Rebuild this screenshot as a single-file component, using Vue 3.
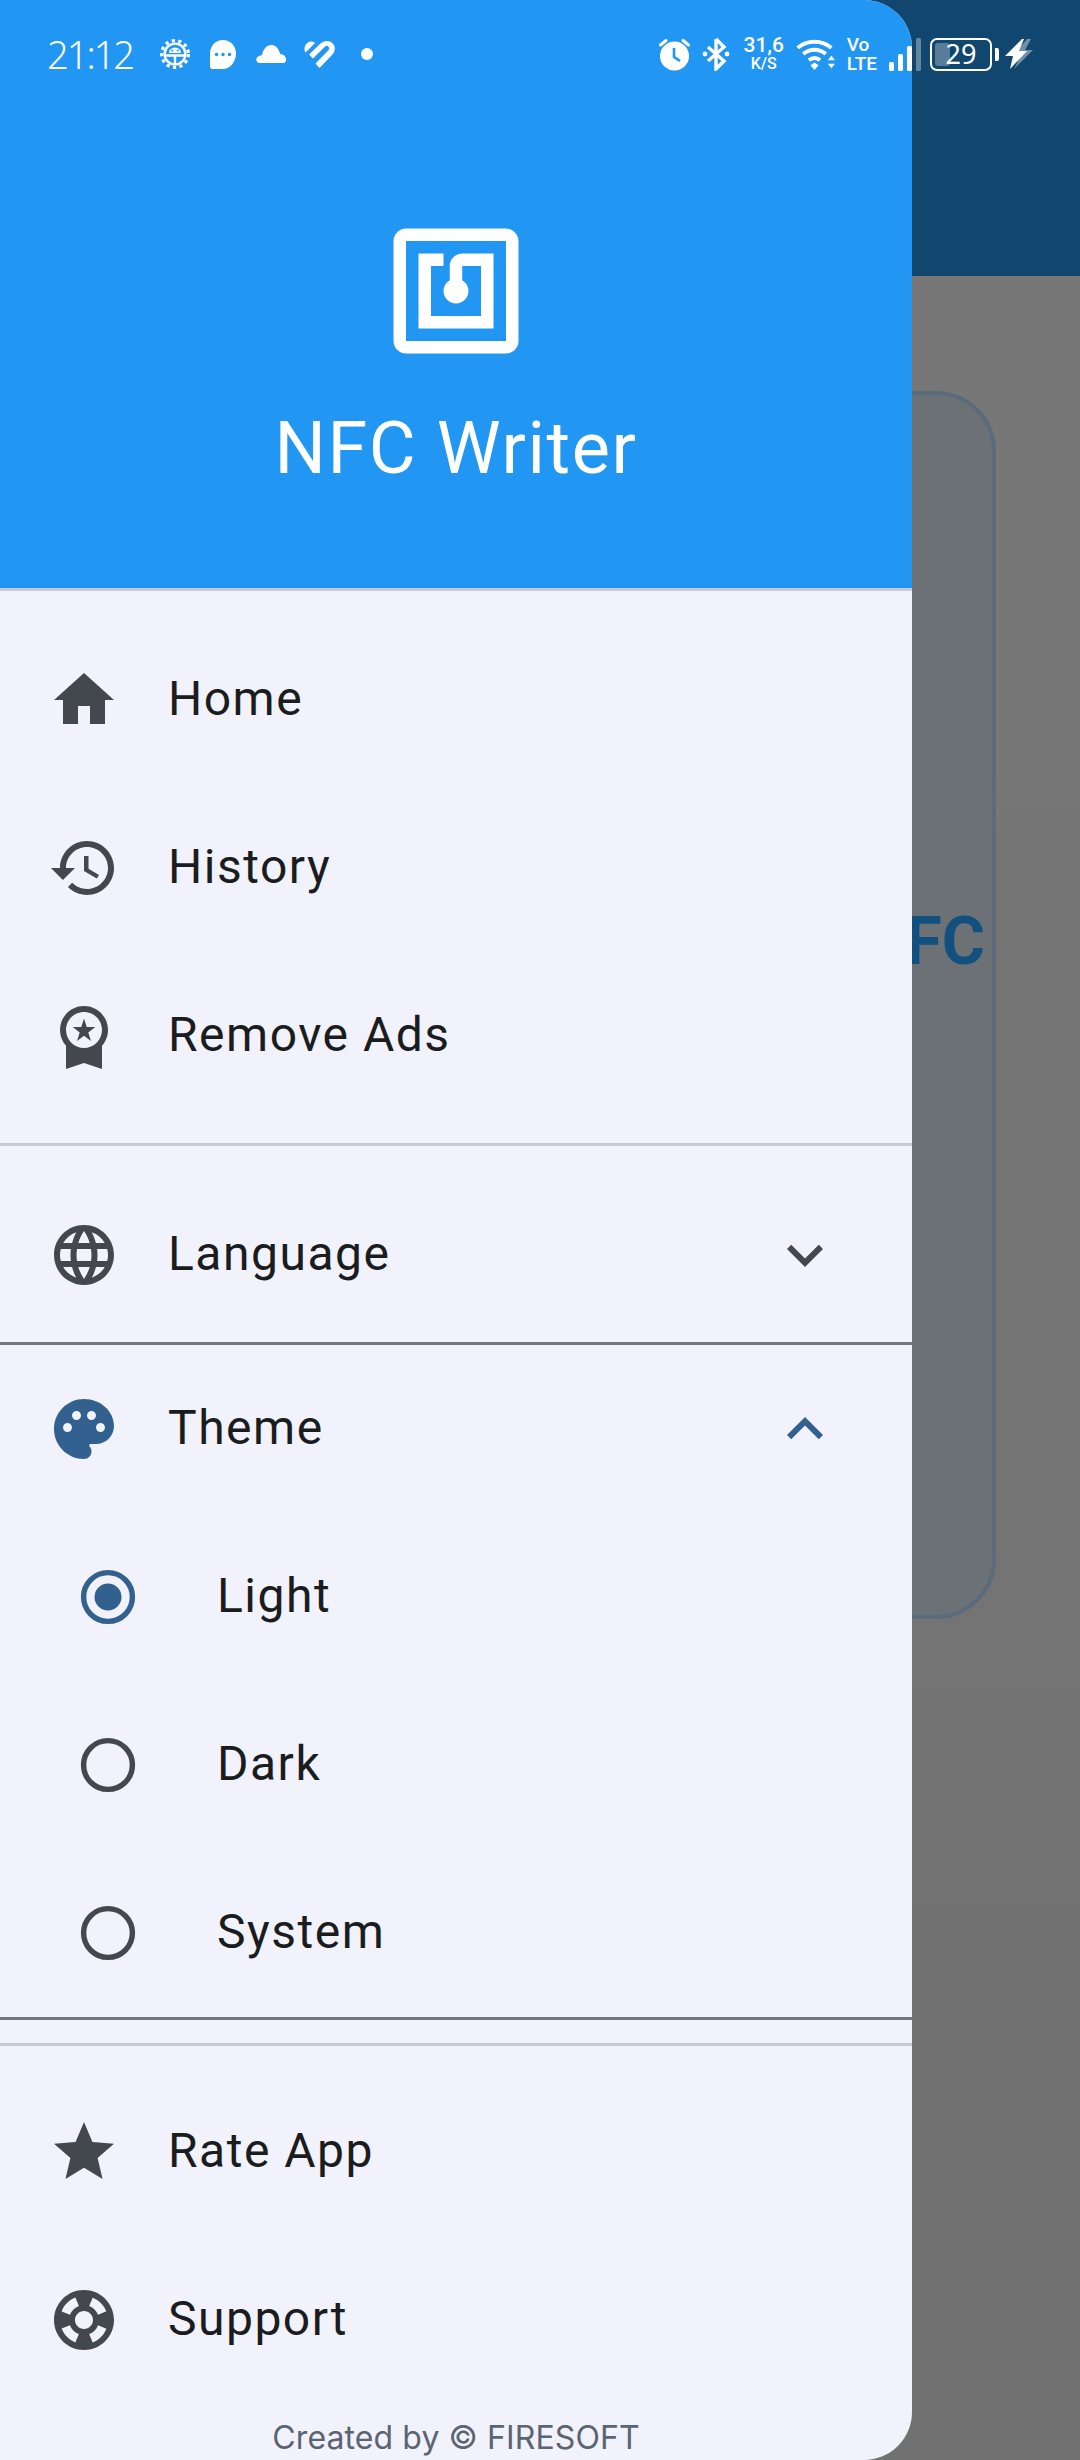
<template>
  <div class="screen">
    <!-- page behind the drawer, dimmed by the scrim -->
    <div class="backdrop">
      <div class="app-bar"></div>
      <div class="card">
        <span class="card-title">NFC</span>
      </div>
    </div>

    <aside class="drawer">
      <header class="drawer-header">
        <svg class="logo" viewBox="0 0 24 24"><path :d="icons.nfc" /></svg>
        <div class="app-name">NFC Writer</div>
      </header>
      <div class="line"></div>

      <nav class="group top-group">
        <div v-for="item in mainItems" :key="item.label" class="row">
          <svg class="icon" viewBox="0 0 24 24"><path :d="item.icon" /></svg>
          <span class="label">{{ item.label }}</span>
        </div>
      </nav>
      <div class="line"></div>

      <div class="row language">
        <svg class="icon" viewBox="0 0 24 24"><path :d="icons.language" /></svg>
        <span class="label">Language</span>
        <svg class="icon" viewBox="0 0 24 24"><path :d="icons.expandMore" /></svg>
      </div>

      <section class="theme">
        <div class="row">
          <svg class="icon active" viewBox="0 0 24 24"><path :d="icons.palette" /></svg>
          <span class="label">Theme</span>
          <svg class="icon active" viewBox="0 0 24 24"><path :d="icons.expandLess" /></svg>
        </div>
        <div v-for="opt in themes" :key="opt" class="row radio-row">
          <svg class="radio" :class="{ on: opt === selectedTheme }" viewBox="0 0 60 60">
            <circle cx="30" cy="30" r="24.4" class="ring" />
            <circle v-if="opt === selectedTheme" cx="30" cy="30" r="13.5" class="dot" />
          </svg>
          <span class="label">{{ opt }}</span>
        </div>
      </section>
      <div class="line spaced"></div>

      <nav class="group bottom-group">
        <div v-for="item in extraItems" :key="item.label" class="row">
          <svg class="icon" viewBox="0 0 24 24"><path :d="item.icon" /></svg>
          <span class="label">{{ item.label }}</span>
        </div>
      </nav>

      <footer class="credit">Created by © FIRESOFT</footer>
    </aside>

    <!-- system status bar lies over both the drawer and the page -->
    <div class="status-bar">
      <span class="time">21:12</span>

      <svg class="st gear" viewBox="0 0 30 30">
        <circle cx="15" cy="15" r="13.400" class="teeth" />
        <circle cx="15" cy="15" r="10.400" class="thin" />
        <path d="M5 16.500h20M15 16.500v9" class="thin" />
        <path d="M9 14a6 5.500 0 0 1 12 0z" fill="#fff" />
        <circle cx="12.300" cy="11.600" r="1" fill="#2196f3" />
        <circle cx="17.700" cy="11.600" r="1" fill="#2196f3" />
      </svg>
      <svg class="st bubble" viewBox="0 0 26 29">
        <path d="M13 0c7.200 0 13 5.800 13 13.500S20.200 29 13 29H2.500C1 29 0 28 0 26.500V13.500C0 5.800 5.800 0 13 0z" fill="#fff" />
        <circle cx="6.500" cy="14.500" r="1.700" fill="#2196f3" />
        <circle cx="13" cy="14.500" r="1.700" fill="#2196f3" />
        <circle cx="19.500" cy="14.500" r="1.700" fill="#2196f3" />
      </svg>
      <svg class="st cloud" viewBox="0 0 30 18">
        <path d="M3.500 18A3.500 3.500 0 0 1 3 11.100C4 10.500 5 10.300 6 10.300 7 4 11 0 15 0c4 0 7 2.500 8.500 7 .3 1 .5 1.500.8 2.300 2 0 3.700.4 4.500 2 2.200 1.800 1.500 6.700-1.800 6.700z" fill="#fff" />
      </svg>
      <svg class="st heart" viewBox="0 0 31 27">
        <path d="M1.500 11.500C-.5 8.500.5 3.500 4 1.500 6.500 0 9 .5 11 2L3.500 9.500z" fill="#fff" />
        <path d="M5 13.500l4 4L20.500 6c1.500-1.500 3-1.500 4-.3 1 1 1 2.500-.3 3.800L11.500 22.500l4 4.500L28 14c4-4.500 3.500-9.500 0-12.300C24.500-1 19.500-.5 16 3z" fill="#fff" />
      </svg>
      <span class="dot-note"></span>

      <span class="spacer"></span>

      <svg class="st alarm" viewBox="0 0 31 33">
        <circle cx="15.500" cy="18" r="14.500" fill="#fff" />
        <path d="M15 10v9l6 4" fill="none" stroke="#2196f3" stroke-width="2.600" />
        <path d="M1.500 7L7 2.500M29.500 7L24 2.500" stroke="#fff" stroke-width="3" stroke-linecap="round" />
      </svg>
      <svg class="st bt" viewBox="0 0 28 34">
        <path d="M14 2v30l8-8-16-14M14 2l8 8-16 14" fill="none" stroke="#fff" stroke-width="3.400" />
        <circle cx="3" cy="17" r="2.400" fill="#fff" />
        <circle cx="25" cy="17" r="2.400" fill="#fff" />
      </svg>
      <div class="speed">
        <span class="speed-num">31,6</span>
        <span class="speed-unit">K/S</span>
      </div>
      <svg class="st wifi" viewBox="0 0 39 32">
        <path d="M1.500 9.500c9-8 24-8 33 0M7 15.500c6.500-5.500 15.500-5.500 22 0M12.500 21.500c3.500-2.800 7.500-2.800 11 0" fill="none" stroke="#fff" stroke-width="3.800" />
        <path d="M14 26.500l4-2.800 4 2.800-4 4.500z" fill="#fff" />
        <path d="M31 21.500l3.500-4.500 3.500 4.500zM31 25l3.500 4.500 3.500-4.500z" fill="#fff" />
      </svg>
      <div class="volte"><span>Vo</span><span>LTE</span></div>
      <svg class="st signal" viewBox="0 0 32 34">
        <rect x="0" y="25" width="5" height="9" rx="1.500" fill="#fff" />
        <rect x="9" y="17" width="5" height="17" rx="1.500" fill="#fff" />
        <rect x="18" y="9" width="5" height="25" rx="1.500" fill="#fff" />
        <rect x="27" y="1" width="5" height="33" rx="1.500" fill="#fff" fill-opacity="0.35" />
      </svg>
      <div class="battery">
        <span class="battery-fill"></span>
        <span class="battery-num">29</span>
      </div>
      <span class="battery-tip"></span>
      <svg class="st bolt" viewBox="0 0 28 32">
        <path d="M22 1L11 14h7L9 31 28 12h-8l6-11z" fill="#fff" fill-opacity="0.4" />
        <path d="M17 1L0 18h8L5 31 22 13h-8l5-12z" fill="#fff" />
      </svg>
    </div>
  </div>
</template>

<script setup>
const icons = {
  nfc: 'M20 2H4c-1.100 0-2 .9-2 2v16c0 1.100.9 2 2 2h16c1.100 0 2-.9 2-2V4c0-1.100-.9-2-2-2zm0 18H4V4h16v16zM18 6h-5c-1.100 0-2 .9-2 2v2.280c-.6.350-1 .980-1 1.720 0 1.100.9 2 2 2s2-.9 2-2c0-.74-.4-1.380-1-1.720V8h3v8H8V8h2V6H6v12h12V6z',
  home: 'M10 20v-6h4v6h5v-8h3L12 3 2 12h3v8z',
  history: 'M13 3c-4.970 0-9 4.030-9 9H1l3.890 3.890.07.140L9 12H6c0-3.870 3.130-7 7-7s7 3.130 7 7-3.130 7-7 7c-1.930 0-3.680-.79-4.940-2.060l-1.420 1.420C8.270 19.990 10.510 21 13 21c4.970 0 9-4.030 9-9s-4.030-9-9-9zm-1 5v5l4.280 2.540.72-1.210-3.500-2.080V8H12z',
  premium: 'M9.680 13.690L12 11.930l2.310 1.760-.88-2.850L15.750 9h-2.840L12 6.190 11.090 9H8.250l2.310 1.840-.88 2.850zM20 10c0-4.420-3.580-8-8-8s-8 3.580-8 8c0 2.030.76 3.870 2 5.280V23l6-2 6 2v-7.720c1.240-1.410 2-3.250 2-5.280zM12 4c3.310 0 6 2.690 6 6s-2.690 6-6 6-6-2.690-6-6 2.690-6 6-6z',
  language: 'M11.990 2C6.470 2 2 6.480 2 12s4.470 10 9.990 10C17.520 22 22 17.520 22 12S17.520 2 11.990 2zm6.930 6h-2.950c-.32-1.250-.78-2.450-1.380-3.560 1.840.63 3.370 1.910 4.330 3.560zM12 4.040c.83 1.200 1.480 2.530 1.910 3.960h-3.820c.43-1.430 1.080-2.760 1.910-3.960zM4.260 14C4.100 13.360 4 12.690 4 12s.1-1.360.26-2h3.380c-.08.66-.14 1.320-.14 2 0 .68.06 1.340.14 2H4.260zm.82 2h2.950c.32 1.250.78 2.450 1.380 3.560-1.840-.63-3.370-1.900-4.330-3.560zm2.950-8H5.080c.96-1.660 2.490-2.930 4.330-3.560C8.810 5.550 8.350 6.750 8.030 8zM12 19.960c-.83-1.200-1.480-2.530-1.910-3.960h3.820c-.43 1.430-1.080 2.760-1.910 3.960zM14.340 14H9.660c-.09-.66-.16-1.320-.16-2 0-.68.07-1.350.16-2h4.680c.09.650.16 1.320.16 2 0 .68-.07 1.340-.16 2zm.25 5.560c.6-1.110 1.060-2.310 1.380-3.560h2.950c-.96 1.650-2.490 2.930-4.330 3.560zM16.360 14c.08-.66.14-1.320.14-2 0-.68-.06-1.340-.14-2h3.380c.16.640.26 1.310.26 2s-.1 1.360-.26 2h-3.380z',
  palette: 'M12 2C6.490 2 2 6.490 2 12s4.490 10 10 10c1.380 0 2.500-1.120 2.500-2.500 0-.61-.23-1.200-.64-1.670-.08-.1-.13-.21-.13-.33 0-.28.22-.5.5-.5H16c3.310 0 6-2.690 6-6 0-4.960-4.490-9-10-9zm5.500 11c-.83 0-1.500-.67-1.500-1.500s.67-1.500 1.500-1.500 1.500.67 1.500 1.500-.67 1.500-1.500 1.500zm-3-4c-.83 0-1.500-.67-1.500-1.500S13.670 6 14.500 6s1.500.67 1.500 1.500S15.330 9 14.500 9zM5 11.500c0-.83.67-1.500 1.500-1.500s1.500.67 1.500 1.500S7.330 13 6.500 13 5 12.330 5 11.500zm6-4c0 .83-.67 1.500-1.500 1.500S8 8.330 8 7.500 8.670 6 9.500 6s1.500.67 1.500 1.500z',
  expandMore: 'M16.590 8.590L12 13.170 7.410 8.590 6 10l6 6 6-6z',
  expandLess: 'M12 8l-6 6 1.410 1.410L12 10.830l4.590 4.580L18 14z',
  star: 'M12 17.270L18.180 21l-1.640-7.030L22 9.240l-7.190-.61L12 2 9.190 8.630 2 9.240l5.460 4.730L5.820 21z',
  support: 'M12 2C6.480 2 2 6.480 2 12c0 5.520 4.480 10 10 10s10-4.480 10-10C22 6.480 17.520 2 12 2zm7.460 7.120l-2.780 1.150c-.51-1.360-1.580-2.440-2.950-2.940l1.150-2.780c2.100.8 3.770 2.470 4.580 4.570zM12 15c-1.660 0-3-1.340-3-3s1.340-3 3-3 3 1.340 3 3-1.340 3-3 3zM9.130 4.540l1.170 2.780c-1.380.5-2.470 1.590-2.980 2.970L4.540 9.130c.81-2.110 2.480-3.780 4.590-4.590zM4.540 14.870l2.780-1.150c.51 1.380 1.590 2.460 2.970 2.960l-1.170 2.780c-2.100-.81-3.770-2.480-4.580-4.590zm10.340 4.590l-1.150-2.780c1.370-.51 2.450-1.590 2.950-2.970l2.780 1.170c-.81 2.100-2.480 3.770-4.580 4.580z'
}

const mainItems = [
  { label: 'Home', icon: icons.home },
  { label: 'History', icon: icons.history },
  { label: 'Remove Ads', icon: icons.premium }
]

const extraItems = [
  { label: 'Rate App', icon: icons.star },
  { label: 'Support', icon: icons.support }
]

const themes = ['Light', 'Dark', 'System']
const selectedTheme = 'Light'
</script>

<style>
html, body {
  margin: 0;
  background: #757575;
}
</style>

<style scoped>
.screen {
  position: relative;
  width: 1080px;
  height: 2460px;
  overflow: hidden;
  font-family: Roboto, "Liberation Sans", sans-serif;
  background: linear-gradient(#787878, #717171);
}

/* page behind */
.app-bar {
  height: 276px;
  background: #11466f;
}

.card {
  box-sizing: border-box;
  height: 1228px;
  margin: 115px 84px 0;
  padding: 507px 7px 0 0;
  display: flex;
  justify-content: flex-end;
  align-items: flex-start;
  border: 4px solid #5a6b7b;
  border-radius: 60px;
  background: #6c7175;
}

.card-title {
  font-size: 66px;
  font-weight: 700;
  line-height: 80px;
  color: #11507f;
}

/* drawer */
.drawer {
  position: absolute;
  top: 0;
  left: 0;
  bottom: 0;
  width: 912px;
  overflow: hidden;
  background: #f1f2fb;
  border-radius: 0 48px 48px 0;
}

.drawer-header {
  box-sizing: border-box;
  height: 588px;
  padding-top: 216px;
  display: flex;
  flex-direction: column;
  align-items: center;
  background: #2196f3;
}

.logo {
  width: 150px;
  height: 150px;
  fill: #fff;
}

.app-name {
  margin-top: 41px;
  font-size: 72px;
  line-height: 84px;
  letter-spacing: 1.6px;
  color: #fff;
}

.line {
  height: 3px;
  background: #c9cad6;
}

.line.spaced {
  margin-top: 23px;
}

.top-group {
  padding: 25px 0 23px;
}

.bottom-group {
  padding-top: 22px;
}

.row {
  height: 168px;
  padding: 0 71px 0 48px;
  display: flex;
  align-items: center;
  gap: 48px;
}

.language {
  margin-top: 25px;
}

.theme {
  margin-top: 3px;
  border-top: 3px solid #74777f;
  border-bottom: 3px solid #74777f;
}

.icon {
  flex: none;
  width: 72px;
  height: 72px;
  fill: #43474e;
}

.icon.active {
  fill: #33618f;
}

.label {
  flex: 1;
  padding-bottom: 2px;
  font-size: 48px;
  line-height: 60px;
  letter-spacing: 1.5px;
  color: #1a1c1e;
}

.radio-row {
  padding-left: 78px;
  gap: 79px;
}

.radio {
  flex: none;
  width: 60px;
  height: 60px;
}

.ring {
  fill: none;
  stroke: #43474e;
  stroke-width: 5.4;
}

.radio.on .ring {
  stroke: #33618f;
}

.dot {
  fill: #33618f;
}

.credit {
  padding-top: 14px;
  text-align: center;
  font-family: Inter, "Liberation Sans", sans-serif;
  font-size: 32px;
  line-height: 40px;
  letter-spacing: 0.1px;
  color: #5b6472;
}

/* status bar */
.status-bar {
  position: absolute;
  top: 0;
  left: 0;
  right: 0;
  height: 108px;
  padding: 0 47px;
  box-sizing: border-box;
  display: flex;
  align-items: center;
  color: #fff;
}

.time {
  width: 86px;
  font-family: "Noto Sans", Roboto, sans-serif;
  font-weight: 300;
  font-size: 38px;
  letter-spacing: -2px;
  white-space: nowrap;
}

.st {
  flex: none;
  display: block;
}

.gear {
  width: 30px;
  height: 30px;
  margin-left: 27px;
}

.teeth {
  fill: none;
  stroke: #fff;
  stroke-width: 3.200;
  stroke-dasharray: 3.200 3.400;
}

.thin {
  fill: none;
  stroke: #fff;
  stroke-width: 2.400;
}

.bubble {
  width: 26px;
  height: 29px;
  margin-left: 20px;
}

.cloud {
  width: 30px;
  height: 18px;
  margin-left: 20px;
}

.heart {
  width: 31px;
  height: 27px;
  margin-left: 18px;
}

.dot-note {
  width: 12px;
  height: 12px;
  margin-left: 26px;
  border-radius: 50%;
  background: #fff;
}

.spacer {
  flex: 1;
}

.alarm {
  width: 31px;
  height: 33px;
}

.bt {
  width: 28px;
  height: 34px;
  margin-left: 12px;
}

.speed {
  width: 40px;
  margin-left: 14px;
  display: flex;
  flex-direction: column;
  align-items: center;
  font-weight: 500;
  white-space: nowrap;
}

.speed-num {
  font-size: 21px;
  line-height: 19px;
}

.speed-unit {
  font-size: 16px;
  line-height: 17px;
}

.wifi {
  width: 40px;
  height: 33px;
  margin-left: 12px;
}

.volte {
  margin-left: 11px;
  display: flex;
  flex-direction: column;
  font-size: 19px;
  font-weight: 500;
  line-height: 19px;
}

.signal {
  width: 32px;
  height: 34px;
  margin-left: 12px;
}

.battery {
  position: relative;
  box-sizing: border-box;
  width: 62px;
  height: 33px;
  margin-left: 9px;
  border: 2.500px solid #fff;
  border-radius: 7px;
  display: flex;
  align-items: center;
  justify-content: center;
}

.battery-fill {
  position: absolute;
  left: 3px;
  top: 3px;
  bottom: 3px;
  width: 15px;
  border-radius: 3px;
  background: rgba(255, 255, 255, 0.3);
}

.battery-num {
  position: relative;
  font-family: "Noto Sans", Roboto, sans-serif;
  font-size: 27px;
  line-height: 28px;
}

.battery-tip {
  width: 4px;
  height: 13px;
  margin-left: 3px;
  border-radius: 0 2px 2px 0;
  background: #fff;
}

.bolt {
  width: 28px;
  height: 32px;
  margin-left: 6px;
}
</style>
